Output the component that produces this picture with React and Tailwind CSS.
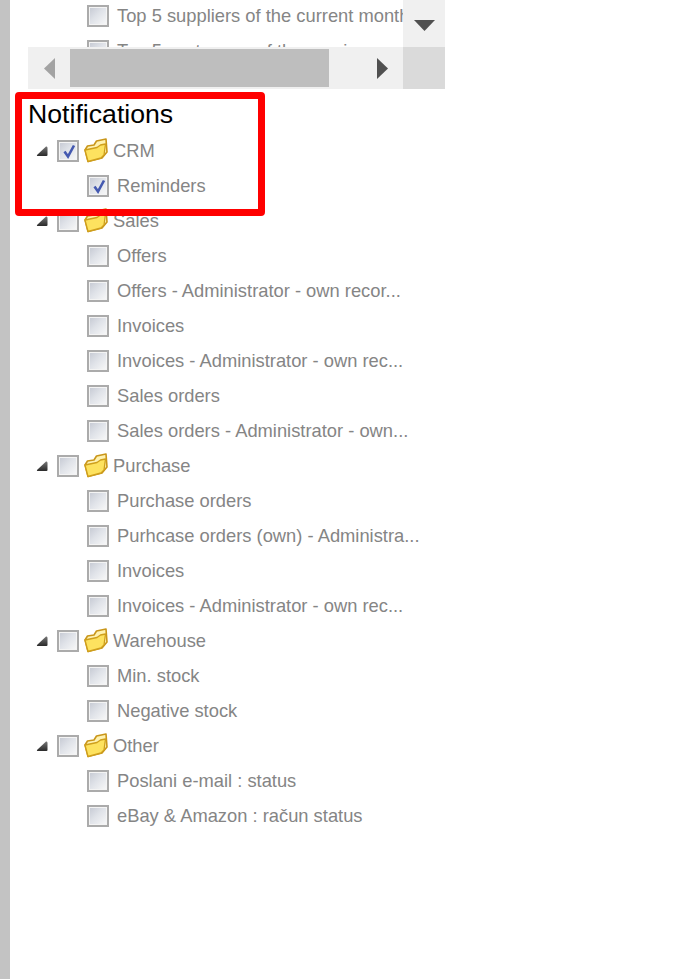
import React from "react";

const Box = ({ checked }) => (
  <span className="relative flex h-[22px] w-[22px] shrink-0 items-center justify-center border-2 border-[#ababab] bg-[linear-gradient(135deg,#c4c8d2_0%,#dfe2e8_45%,#f9f9f9_100%)] shadow-[inset_0_0_0_1px_#f4f4f4]">
    {checked && (
      <svg width="18" height="18" viewBox="0 0 18 18" className="absolute">
        <path d="M5.5 9.5 L9 14.5 L15 3.5" fill="none" stroke="#4459b0" strokeWidth="2.6" />
      </svg>
    )}
  </span>
);

const Folder = () => (
  <svg width="25" height="25" viewBox="0 0 25 25" className="shrink-0">
    <path d="M2 12 L4.5 8 L11 7 L13.5 3 L23 1 L24 14 L19 20 L5 23.5 Z" fill="#fff2b0" stroke="#c9961a" strokeWidth="1.6" strokeLinejoin="round" />
    <path d="M2 12 L14 9.5 L17.5 7 L22.5 6 L21 17 L18 20 L5 23.5 Z" fill="#fde25f" stroke="#cf9f1c" strokeWidth="1.3" strokeLinejoin="round" />
  </svg>
);

const Expander = () => (
  <svg width="12" height="12" viewBox="0 0 12 12" className="shrink-0">
    <defs>
      <linearGradient id="exp" x1="0" y1="0" x2="0" y2="1">
        <stop offset="0" stopColor="#777" />
        <stop offset="1" stopColor="#2a2a2a" />
      </linearGradient>
    </defs>
    <path d="M1 10 L10 1.5 Q11.5 1 11.5 3 L11.5 10 Q11.5 11 10.5 11 L1.5 11 Q0.5 11 1 10 Z" fill="url(#exp)" />
  </svg>
);

const Parent = ({ label, checked }) => (
  <div className="flex h-[35px] items-center pl-[36px]">
    <Expander />
    <span className="ml-[9px]"><Box checked={checked} /></span>
    <span className="ml-[4px]"><Folder /></span>
    <span className="ml-[5px] whitespace-nowrap">{label}</span>
  </div>
);

const Child = ({ label, checked, indent = "pl-[87px]" }) => (
  <div className={`flex h-[35px] items-center ${indent}`}>
    <Box checked={checked} />
    <span className="ml-[8px] whitespace-nowrap">{label}</span>
  </div>
);

const groups = [
  ["CRM", true, ["Reminders"]],
  ["Sales", false, ["Offers", "Offers - Administrator - own recor...", "Invoices", "Invoices - Administrator - own rec...", "Sales orders", "Sales orders - Administrator - own..."]],
  ["Purchase", false, ["Purchase orders", "Purhcase orders (own) - Administra...", "Invoices", "Invoices - Administrator - own rec..."]],
  ["Warehouse", false, ["Min. stock", "Negative stock"]],
  ["Other", false, ["Poslani e-mail : status", "eBay & Amazon : račun status"]],
];

export default function App() {
  return (
    <div className="relative flex min-h-[979px] w-[689px] overflow-hidden bg-white font-['Liberation_Sans',Arial,sans-serif] text-[18.33px] text-[#858585]">
      <div className="w-[10px] shrink-0 bg-[#c3c3c3]" />
      <div className="flex-1">
        <div className="ml-[18px] w-[417px]">
          <div className="flex h-[47px] overflow-hidden">
            <div className="w-[375px] overflow-hidden">
              <div className="-mt-[1.5px]">
                <Child indent="pl-[59px]" label="Top 5 suppliers of the current month" />
                <Child indent="pl-[59px]" label="Top 5 customers of the previous" />
              </div>
            </div>
            <div className="flex w-[42px] items-start justify-center bg-[#f0f0f0] pt-[20px]">
              <svg width="21" height="11" viewBox="0 0 21 11"><path d="M0 0 H21 L10.5 11 Z" fill="#505050" /></svg>
            </div>
          </div>
          <div className="flex h-[42px]">
            <div className="flex w-[42px] items-center justify-center bg-[#f0f0f0]">
              <svg width="11" height="21" viewBox="0 0 11 21"><path d="M11 0 V21 L0 10.5 Z" fill="#a3a3a3" /></svg>
            </div>
            <div className="flex flex-1 items-center bg-[#f0f0f0]">
              <div className="h-[38px] w-[259px] bg-[#bebebe]" />
            </div>
            <div className="flex w-[32px] items-center justify-center bg-[#f0f0f0] pr-[10px]">
              <svg width="11" height="21" viewBox="0 0 11 21"><path d="M0 0 V21 L11 10.5 Z" fill="#505050" /></svg>
            </div>
            <div className="w-[42px] bg-[#dadada]" />
          </div>
        </div>
        <div className="ml-[18px] mt-[9px] h-[35px] text-[26.67px] leading-[32px] text-black">Notifications</div>
        <div className="-ml-[10px]">
          {groups.map(([label, checked, children]) => (
            <div key={label}>
              <Parent label={label} checked={checked} />
              {children.map((c, i) => (
                <Child key={i} label={c} checked={checked} />
              ))}
            </div>
          ))}
        </div>
      </div>
      <div className="absolute left-[15px] top-[92px] h-[124px] w-[249.5px] rounded-[4px] border-[7px] border-[#ff0000]" />
    </div>
  );
}
